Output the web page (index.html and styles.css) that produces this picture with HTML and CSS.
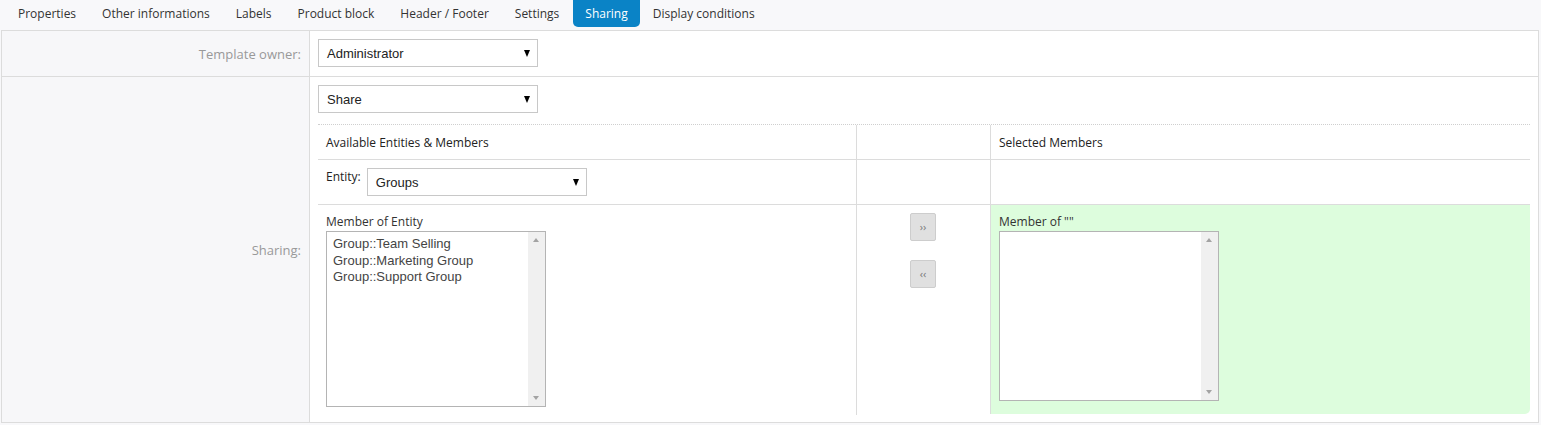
FILE: index.html
```html
<!DOCTYPE html>
<html>
<head>
<meta charset="utf-8">
<link rel="stylesheet" href="styles.css">
</head>
<body>
<nav class="tabs">
  <span class="tab">Properties</span>
  <span class="tab">Other informations</span>
  <span class="tab">Labels</span>
  <span class="tab">Product block</span>
  <span class="tab">Header / Footer</span>
  <span class="tab">Settings</span>
  <span class="tab active">Sharing</span>
  <span class="tab">Display conditions</span>
</nav>
<div class="form">
  <div class="row row-owner">
    <div class="label">Template owner:</div>
    <div class="field"><div class="select">Administrator</div></div>
  </div>
  <div class="row row-sharing">
    <div class="label">Sharing:</div>
    <div class="field">
      <div class="select">Share</div>
      <div class="dotted"></div>
      <div class="share-grid">
        <div class="cell head">Available Entities &amp; Members</div>
        <div class="cell head mid"></div>
        <div class="cell head right">Selected Members</div>

        <div class="cell entity-row"><span class="entity-label">Entity:</span><div class="select">Groups</div></div>
        <div class="cell entity-row mid"></div>
        <div class="cell entity-row right"></div>

        <div class="cell members">
          <div class="list-label">Member of Entity</div>
          <div class="listbox tall">
            <div class="options">
              <div>Group::Team Selling</div>
              <div>Group::Marketing Group</div>
              <div>Group::Support Group</div>
            </div>
            <div class="scrollbar"><span class="arr up"></span><span class="arr down"></span></div>
          </div>
        </div>
        <div class="cell members mid buttons">
          <span class="btn">&rsaquo;&rsaquo;</span>
          <span class="btn">&lsaquo;&lsaquo;</span>
        </div>
        <div class="cell members right selected">
          <div class="list-label">Member of ""</div>
          <div class="listbox short">
            <div class="options"></div>
            <div class="scrollbar"><span class="arr up"></span><span class="arr down"></span></div>
          </div>
        </div>
      </div>
    </div>
  </div>
</div>
</body>
</html>
```
FILE: styles.css
```css
* { box-sizing: border-box; }
html, body { margin: 0; padding: 0; }
body {
  background: #f8f8fa;
  font-family: "Open Sans", "Liberation Sans", sans-serif;
  font-size: 13px;
  color: #333;
  width: 1541px;
  height: 425px;
  overflow: hidden;
}
.tabs {
  display: flex;
  height: 30px;
  padding-left: 5px;
}
.tab {
  display: flex;
  align-items: center;
  height: 27px;
  padding: 0 13px;
  font-size: 12px;
  color: #333;
  white-space: nowrap;
}
.tab.active {
  background: #0a83c6;
  color: #fff;
  border-radius: 0 0 5px 5px;
  padding: 0 12px;
  margin-left: 1px;
}
.form {
  margin-left: 1px;
  width: 1538px;
  border: 1px solid #dcdcdc;
  background: #fff;
}
.row {
  display: grid;
  grid-template-columns: 308px 1fr;
}
.row-owner { border-bottom: 1px solid #dcdcdc; height: 46px; }
.row-sharing { height: 345px; }
.label {
  background: #f7f7f9;
  border-right: 1px solid #dcdcdc;
  color: #999;
  display: flex;
  align-items: center;
  justify-content: flex-end;
  padding-right: 8px;
}
.field {
  padding: 8px 8px 0 8px;
}
.select {
  position: relative;
  width: 220px;
  height: 28px;
  border: 1px solid #c8c8c8;
  background: #fff;
  font-family: "Liberation Sans", Arial, sans-serif;
  font-size: 13px;
  color: #222;
  line-height: 26px;
  padding: 1px 0 0 8px;
}
.select::after {
  content: "";
  position: absolute;
  right: 7px;
  top: 10px;
  border-left: 3px solid transparent;
  border-right: 3px solid transparent;
  border-top: 7px solid #000;
}
.dotted {
  margin-top: 11px;
  border-top: 1px dotted #cfcfcf;
}
.share-grid {
  display: grid;
  grid-template-columns: 538px 134px 1fr;
  grid-template-rows: 35px 45px 210px;
}
.cell {
  padding: 0 8px;
  border-bottom: 1px solid #dcdcdc;
}
.cell.mid, .cell.right { border-left: 1px solid #dcdcdc; }
.cell.members { border-bottom: none; }
.head {
  display: flex;
  align-items: center;
  font-size: 12px;
  color: #222;
}
.entity-row {
  display: flex;
  align-items: flex-start;
  padding-top: 8px;
  font-size: 12px;
}
.entity-label {
  margin-right: 6px;
  line-height: 18px;
  color: #222;
}
.members { padding-top: 7px; }
.list-label {
  font-size: 12px;
  line-height: 19px;
  color: #333;
}
.listbox {
  display: flex;
  width: 220px;
  border: 1px solid #b4b4b4;
  background: #fff;
}
.listbox.tall { height: 176px; }
.listbox.short { height: 170px; }
.options {
  flex: 1;
  padding: 4px 0 0 6px;
  font-family: "Liberation Sans", Arial, sans-serif;
  font-size: 13px;
  line-height: 16.5px;
  color: #444;
}
.scrollbar {
  position: relative;
  width: 17px;
  background: #f0f0f0;
}
.arr {
  position: absolute;
  left: 5px;
  border-left: 3.5px solid transparent;
  border-right: 3.5px solid transparent;
}
.arr.up { top: 6px; border-bottom: 4px solid #a3a3a3; }
.arr.down { bottom: 6px; border-top: 4px solid #a3a3a3; }
.buttons {
  display: flex;
  flex-direction: column;
  align-items: center;
  gap: 19px;
  padding-top: 8px;
  padding-right: 9px;
}
.btn {
  width: 26px;
  height: 28px;
  background: #e0e0e0;
  border: 1px solid #cdcdcd;
  border-radius: 2px;
  color: #777;
  font-family: "Open Sans", sans-serif;
  font-size: 11px;
  display: flex;
  align-items: center;
  justify-content: center;
  padding-bottom: 1px;
}
.selected {
  background: #ddfddd;
  border-radius: 0 0 5px 0;
  height: 209px;
}
```
